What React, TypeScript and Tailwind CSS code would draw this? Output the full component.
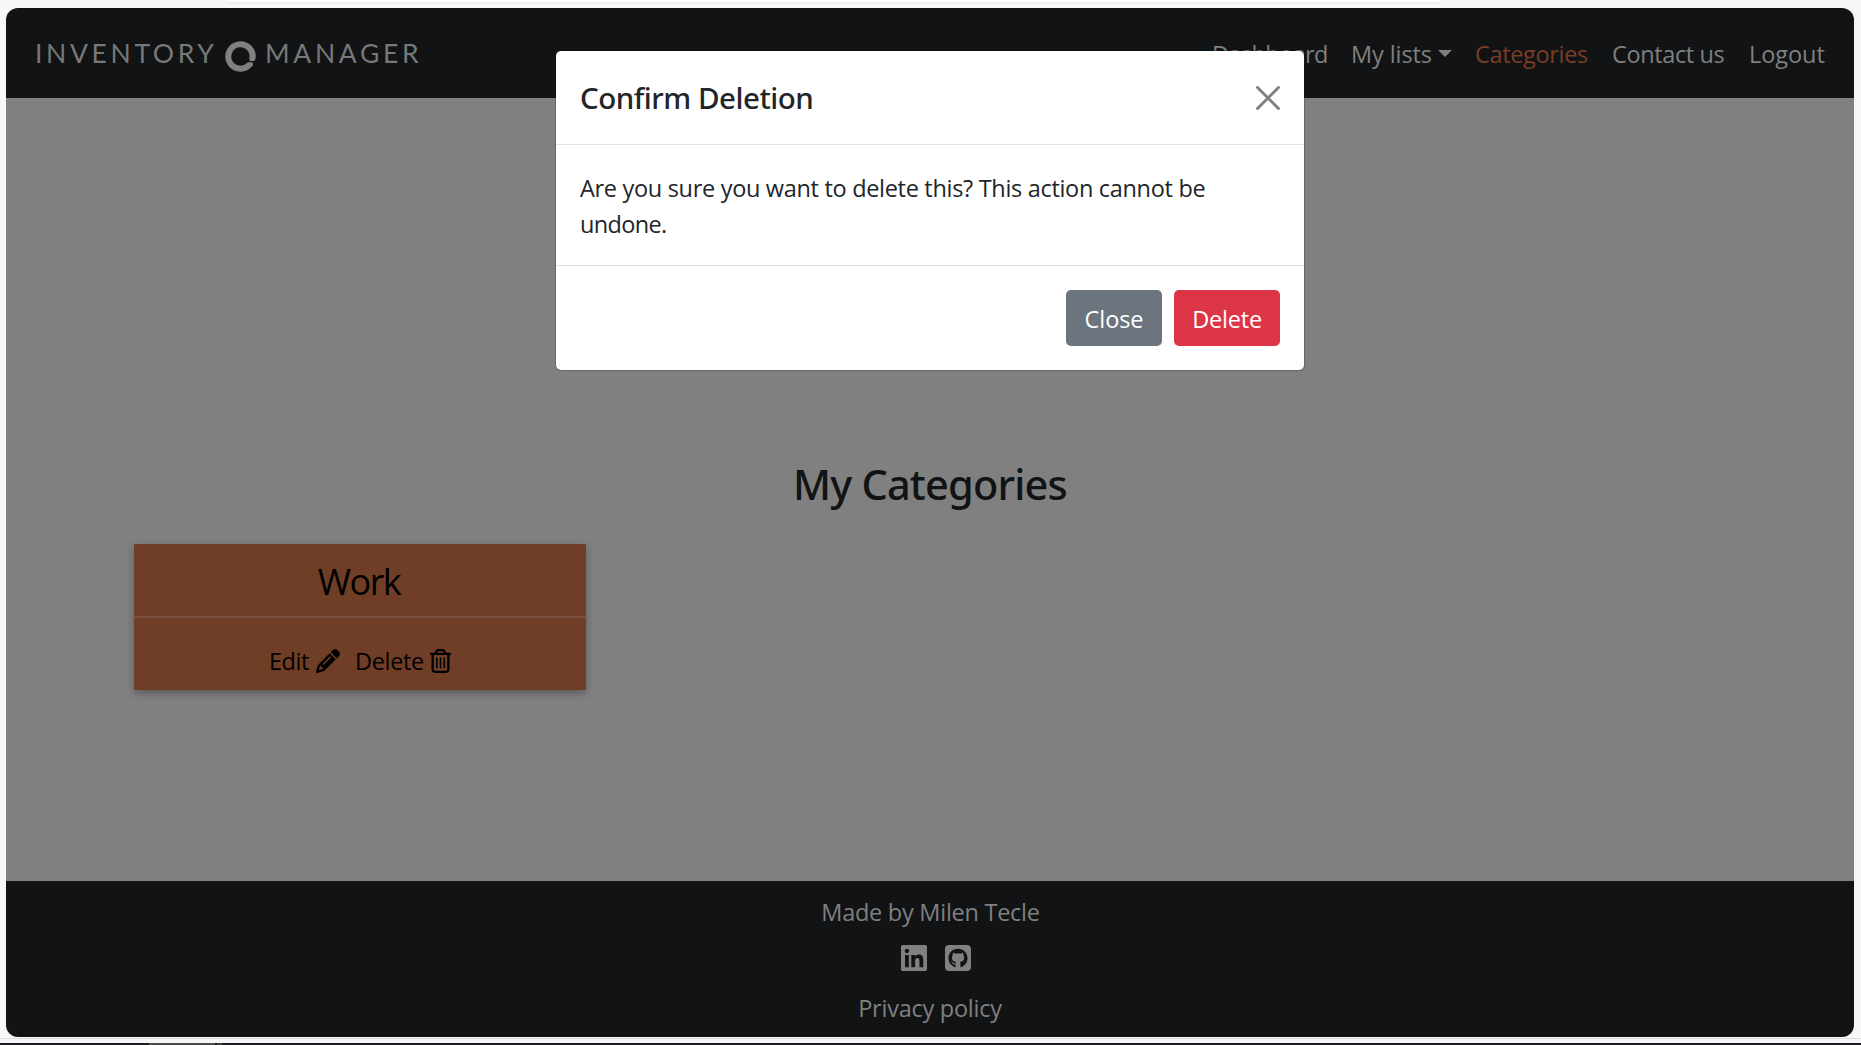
import React from 'react';
import { FaLinkedin, FaPencil, FaRegTrashCan, FaSquareGithub } from 'react-icons/fa6';

function Logo() {
  return (
    <a href="#" className="flex h-[90px] items-start font-['Lato','Liberation_Sans',sans-serif] text-[26.5px] leading-[36px] text-[#777879]">
      <span className="mt-[27px] w-[190px] tracking-[3.65px]">INVENTORY</span>
      <svg className="mt-[33px] h-[31px] w-[31px] shrink-0" viewBox="0 0 31 31" fill="none" stroke="#808080">
        <path d="M27.450 17.900A12.200 12.200 0 1 0 24.400 23.800" strokeWidth="6" />
        <circle cx="27.200" cy="17.400" r="2.900" fill="#808080" stroke="none" />
        <circle cx="25" cy="23.200" r="2.900" fill="#808080" stroke="none" />
        <path d="M22.500 20.600L31 21" stroke="#111315" strokeWidth="1.200" />
      </svg>
      <span className="mt-[27px] ml-[9px] tracking-[3.68px]">MANAGER</span>
    </a>
  );
}

function Navbar() {
  return (
    <header className="flex h-[90px] shrink-0 justify-between bg-[#111315] pl-[29px] pr-[27px]">
      <Logo />
      <nav className="flex items-start whitespace-nowrap pt-7 leading-9 text-[#808080]">
        <a href="#" className="w-[139px] tracking-[-0.6px]">Dashboard</a>
        <a href="#" className="flex w-[124px] tracking-[-0.1px]">
          My lists
          <svg className="ml-[6px] mt-[14px] h-[7px] w-[14px]" viewBox="0 0 14 7" fill="#808080">
            <path d="M0 0h14L7 7z" />
          </svg>
        </a>
        <a href="#" className="w-[137px] tracking-[-0.34px] text-[#7a3d26]">Categories</a>
        <a href="#" className="w-[137px] tracking-[-0.38px]">Contact us</a>
        <a href="#" className="w-[78px] tracking-[-0.05px]">Logout</a>
      </nav>
    </header>
  );
}

function CategoryCard() {
  return (
    <article className="ml-32 mt-[35px] flex h-[146px] w-[452px] flex-col bg-[#703e26] text-black shadow-[0_3px_8px_rgba(0,0,0,0.3)]">
      <h2 className="h-[72px] pr-[2px] pt-4 text-center text-[36px] leading-[43px] tracking-[-1.5px]">Work</h2>
      <div className="h-[2px] bg-[#774e3c]" />
      <div className="flex items-start pl-[135px] pt-[25px] leading-9">
        <a href="#" className="flex w-[86px] tracking-[-0.46px]">
          Edit
          <FaPencil className="ml-[7px] mt-[6px] h-6 w-6" />
        </a>
        <a href="#" className="flex tracking-[-0.35px]">
          Delete
          <FaRegTrashCan className="ml-[6px] mt-[6px] h-6 w-[21px]" />
        </a>
      </div>
    </article>
  );
}

function Footer() {
  return (
    <footer className="flex h-[156px] shrink-0 flex-col items-center bg-[#111315] pt-[13px] text-[#808080]">
      <p className="pl-px leading-9 tracking-[-0.26px]">Made by Milen Tecle</p>
      <div className="mt-[13px] flex gap-[18px] pl-3">
        <FaLinkedin className="h-[30px] w-[26px]" />
        <FaSquareGithub className="h-[30px] w-[26px]" />
      </div>
      <a href="#" className="mt-[17px] leading-9 tracking-[-0.25px]">Privacy policy</a>
    </footer>
  );
}

function ConfirmModal() {
  return (
    <section
      role="dialog"
      className="absolute left-[550px] top-[43px] flex h-[319px] w-[748px] flex-col rounded-[5px] bg-white text-[#212529] shadow-[0_0_0_1px_rgba(0,0,0,0.2)]"
    >
      <div className="flex h-[94px] shrink-0 items-start justify-between border-b border-[#dee2e6] px-6">
        <h5 className="mt-[25px] font-['Noto_Sans',sans-serif] text-[29.5px] font-medium leading-[44px] tracking-[-0.48px]">
          Confirm Deletion
        </h5>
        <button aria-label="Close" className="mt-[35px]">
          <svg className="h-6 w-6" viewBox="0 0 24 24" fill="none" stroke="#808080" strokeWidth="2.9" strokeLinecap="round">
            <path d="M1.500 1.500l21 21M22.500 1.500l-21 21" />
          </svg>
        </button>
      </div>
      <p className="h-[120px] shrink-0 whitespace-nowrap px-6 pt-[25px] leading-9 tracking-[-0.31px]">
        Are you sure you want to delete this? This action cannot be
        <br />
        <span className="tracking-[-0.65px]">undone.</span>
      </p>
      <div className="flex grow items-start justify-end gap-3 border-t border-[#dee2e6] px-6 pt-6 text-white">
        <button className="h-14 w-24 rounded-[5px] bg-[#6c757d] pb-[9px] pt-[11px] leading-9 tracking-[-0.1px]">Close</button>
        <button className="h-14 w-[106px] rounded-[5px] bg-[#dc3545] pb-[9px] pt-[11px] leading-9 tracking-[-0.2px]">Delete</button>
      </div>
    </section>
  );
}

export default function App() {
  return (
    <div className="flex h-[1045px] w-full flex-col overflow-hidden bg-[#f7f7f7] font-['Open_Sans','Noto_Sans',sans-serif] text-[23.5px]">
      <div className="ml-[225px] mr-[420px] h-[2px] shrink-0 rounded-b-lg bg-white shadow-[0_1px_2px_rgba(0,0,0,0.08)]" />
      <div className="relative ml-[6px] mt-[6px] flex h-[1029px] w-[1848px] shrink-0 flex-col overflow-hidden rounded-[12px]">
        <Navbar />
        <main className="flex h-[783px] shrink-0 flex-col bg-[#808080] pt-[361px]">
          <h1 className="text-center font-['Noto_Sans',sans-serif] text-[41.5px] font-medium leading-[50px] tracking-[-0.81px] text-[#111315]">
            My Categories
          </h1>
          <CategoryCard />
        </main>
        <Footer />
        <ConfirmModal />
      </div>
      <div className="mt-px h-px shrink-0 bg-[#dedede]" />
      <div className="mt-1 flex h-[2px] shrink-0 bg-[#1b1c1f] pl-[149px]">
        <div className="w-[66px] bg-[#4c4c4c]" />
        <div className="ml-[2px] w-[5px] bg-[#3c3c3c]" />
      </div>
    </div>
  );
}
